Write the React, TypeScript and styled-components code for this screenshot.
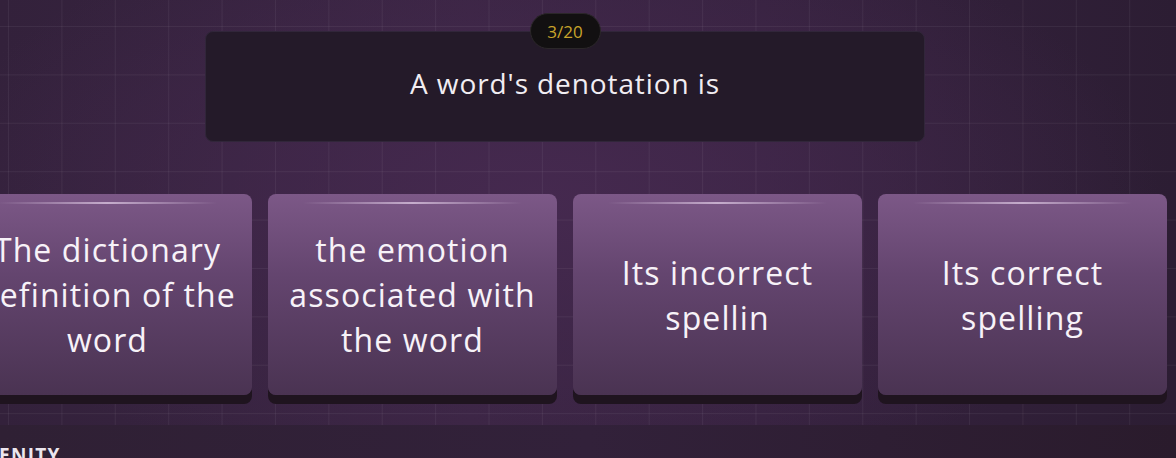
import styled, { createGlobalStyle } from 'styled-components';

const GlobalStyle = createGlobalStyle`
  html, body {
    margin: 0;
    padding: 0;
    background: #2c1d31;
    overflow: hidden;
  }
  * { box-sizing: border-box; }
`;

const Page = styled.div`
  width: 1176px;
  height: 458px;
  display: flex;
  flex-direction: column;
  overflow: hidden;
  font-family: "Open Sans", "Noto Sans", sans-serif;
  color: #f4eef6;
`;

const Arena = styled.main`
  height: 425px;
  padding-top: 13px;
  background-color: #35223d;
  background-image:
    linear-gradient(rgba(255, 255, 255, 0.055) 1px, transparent 1px),
    linear-gradient(90deg, rgba(255, 255, 255, 0.055) 1px, transparent 1px),
    radial-gradient(ellipse 620px 300px at 540px 200px, #45294f 0%, rgba(69, 41, 79, 0) 100%),
    linear-gradient(90deg, #33213b 0%, #3a2543 40%, #36223f 65%, #2c1d33 100%);
  background-size: 53.4px 48.4px, 53.4px 48.4px, 100% 100%, 100% 100%;
  background-position: 0 26px, 8px 0, 0 0, 0 0;
`;

const Stage = styled.div`
  width: 1130px;
  display: flex;
  flex-direction: column;
  align-items: center;
`;

const Counter = styled.div`
  position: relative;
  z-index: 2;
  width: 71px;
  height: 36px;
  margin-bottom: -18px;
  display: flex;
  align-items: center;
  justify-content: center;
  border-radius: 18px;
  background: #121011;
  border: 1px solid #2b2729;
  color: #c9a42b;
  font-size: 17px;
`;

const Question = styled.section`
  width: 720px;
  height: 111px;
  padding-bottom: 8px;
  display: flex;
  align-items: center;
  justify-content: center;
  border-radius: 8px;
  background: #241a29;
  border: 1px solid #31263a;
  font-size: 28px;
  letter-spacing: 0.9px;
  color: #f1edf2;
`;

const Answers = styled.div`
  margin-top: 52px;
  display: flex;
  justify-content: center;
  gap: 16px;
  width: 100%;
`;

const Answer = styled.button`
  position: relative;
  flex: 0 0 289px;
  height: 201px;
  padding: 0 6px;
  display: flex;
  align-items: center;
  justify-content: center;
  border: none;
  border-radius: 8px;
  background: linear-gradient(180deg, #7c5887 0%, #64456f 40%, #4a3352 100%);
  box-shadow: 0 9px 0 #1f141f;
  color: #f7f2f8;
  font-family: inherit;
  font-size: 32px;
  letter-spacing: 1.1px;
  line-height: 45px;
  text-align: center;
  cursor: pointer;

  &::before {
    content: '';
    position: absolute;
    top: 8px;
    left: 12%;
    right: 12%;
    height: 2px;
    background: linear-gradient(90deg, rgba(255, 255, 255, 0) 0%, rgba(230, 210, 235, 0.7) 50%, rgba(255, 255, 255, 0) 100%);
  }
`;

const Footer = styled.footer`
  flex: 1;
  background: linear-gradient(90deg, #2f2034 0%, #32213a 50%, #2a1b2c 100%);
  overflow: hidden;
`;

const Brand = styled.div`
  margin-top: 21px;
  margin-left: -1px;
  font-size: 19px;
  font-weight: 700;
  letter-spacing: 1.3px;
  color: #ece6ee;
  line-height: 1;
`;

const answers = [
  'The dictionary definition of the word',
  'the emotion associated with the word',
  'Its incorrect spellin',
  'Its correct spelling',
];

export default function App() {
  return (
    <>
      <GlobalStyle />
      <Page>
        <Arena>
          <Stage>
            <Counter>3/20</Counter>
            <Question>A word's denotation is</Question>
            <Answers>
              {answers.map((a) => (
                <Answer key={a}>{a}</Answer>
              ))}
            </Answers>
          </Stage>
        </Arena>
        <Footer>
          <Brand>ENITY</Brand>
        </Footer>
      </Page>
    </>
  );
}
